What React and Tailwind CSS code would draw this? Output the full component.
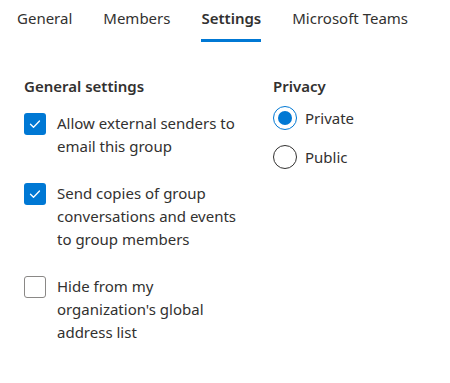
import { useState } from 'react';

const tabs = ['General', 'Members', 'Settings', 'Microsoft Teams'];

const options = [
  { id: 'ext', label: 'Allow external senders to email this group', checked: true },
  { id: 'copies', label: 'Send copies of group conversations and events to group members', checked: true },
  { id: 'hide', label: "Hide from my organization's global address list", checked: false },
];

function Check({ on }) {
  if (!on) {
    return <span className="mt-[1px] block h-[22px] w-[22px] shrink-0 rounded-[3px] border border-[#8a8886] bg-white" />;
  }
  return (
    <span className="mt-[1px] flex h-[22px] w-[22px] shrink-0 items-center justify-center rounded-[3px] bg-[#0078d4]">
      <svg width="12" height="12" viewBox="0 0 12 12" fill="none">
        <path d="M1.5 6.3 4.5 9.2 10.5 3" stroke="white" strokeWidth="1.3" strokeLinecap="round" strokeLinejoin="round" />
      </svg>
    </span>
  );
}

function Radio({ on }) {
  return (
    <span
      className={
        'flex h-[24px] w-[24px] shrink-0 items-center justify-center rounded-full border ' +
        (on ? 'border-[#0078d4]' : 'border-[#323130]')
      }
    >
      {on && <span className="block h-[14px] w-[14px] rounded-full bg-[#0078d4]" />}
    </span>
  );
}

export default function App() {
  const [tab] = useState('Settings');
  const [privacy] = useState('Private');

  return (
    <div className="h-[383px] w-[450px] bg-white text-[15px] text-[#323130]" style={{ fontFamily: '"Noto Sans", sans-serif' }}>
      <div className="flex gap-[31px] whitespace-nowrap pl-[17px] pt-[6px]">
        {tabs.map((t) => (
          <div key={t} className="flex flex-col">
            <span className={'text-[15px] leading-[24px] ' + (t === tab ? 'font-semibold' : '')}>{t}</span>
            <span className={'mt-[9px] h-[3px] ' + (t === tab ? 'bg-[#0078d4]' : '')} />
          </div>
        ))}
      </div>

      <div className="flex pl-[24px] pt-[32px]">
        <div className="w-[249px]">
          <div className="font-semibold leading-[24px]">General settings</div>
          <div className="mt-[14px] flex flex-col gap-[24px]">
            {options.map((o) => (
              <label key={o.id} className="flex gap-[11px]">
                <Check on={o.checked} />
                <span className="w-[180px] leading-[23px]">{o.label}</span>
              </label>
            ))}
          </div>
        </div>
        <div>
          <div className="font-semibold leading-[24px]">Privacy</div>
          <div className="mt-[8px] flex flex-col gap-[15px]">
            {['Private', 'Public'].map((p) => (
              <label key={p} className="flex items-center gap-[8px]">
                <Radio on={p === privacy} />
                <span className="leading-[24px]">{p}</span>
              </label>
            ))}
          </div>
        </div>
      </div>
    </div>
  );
}
